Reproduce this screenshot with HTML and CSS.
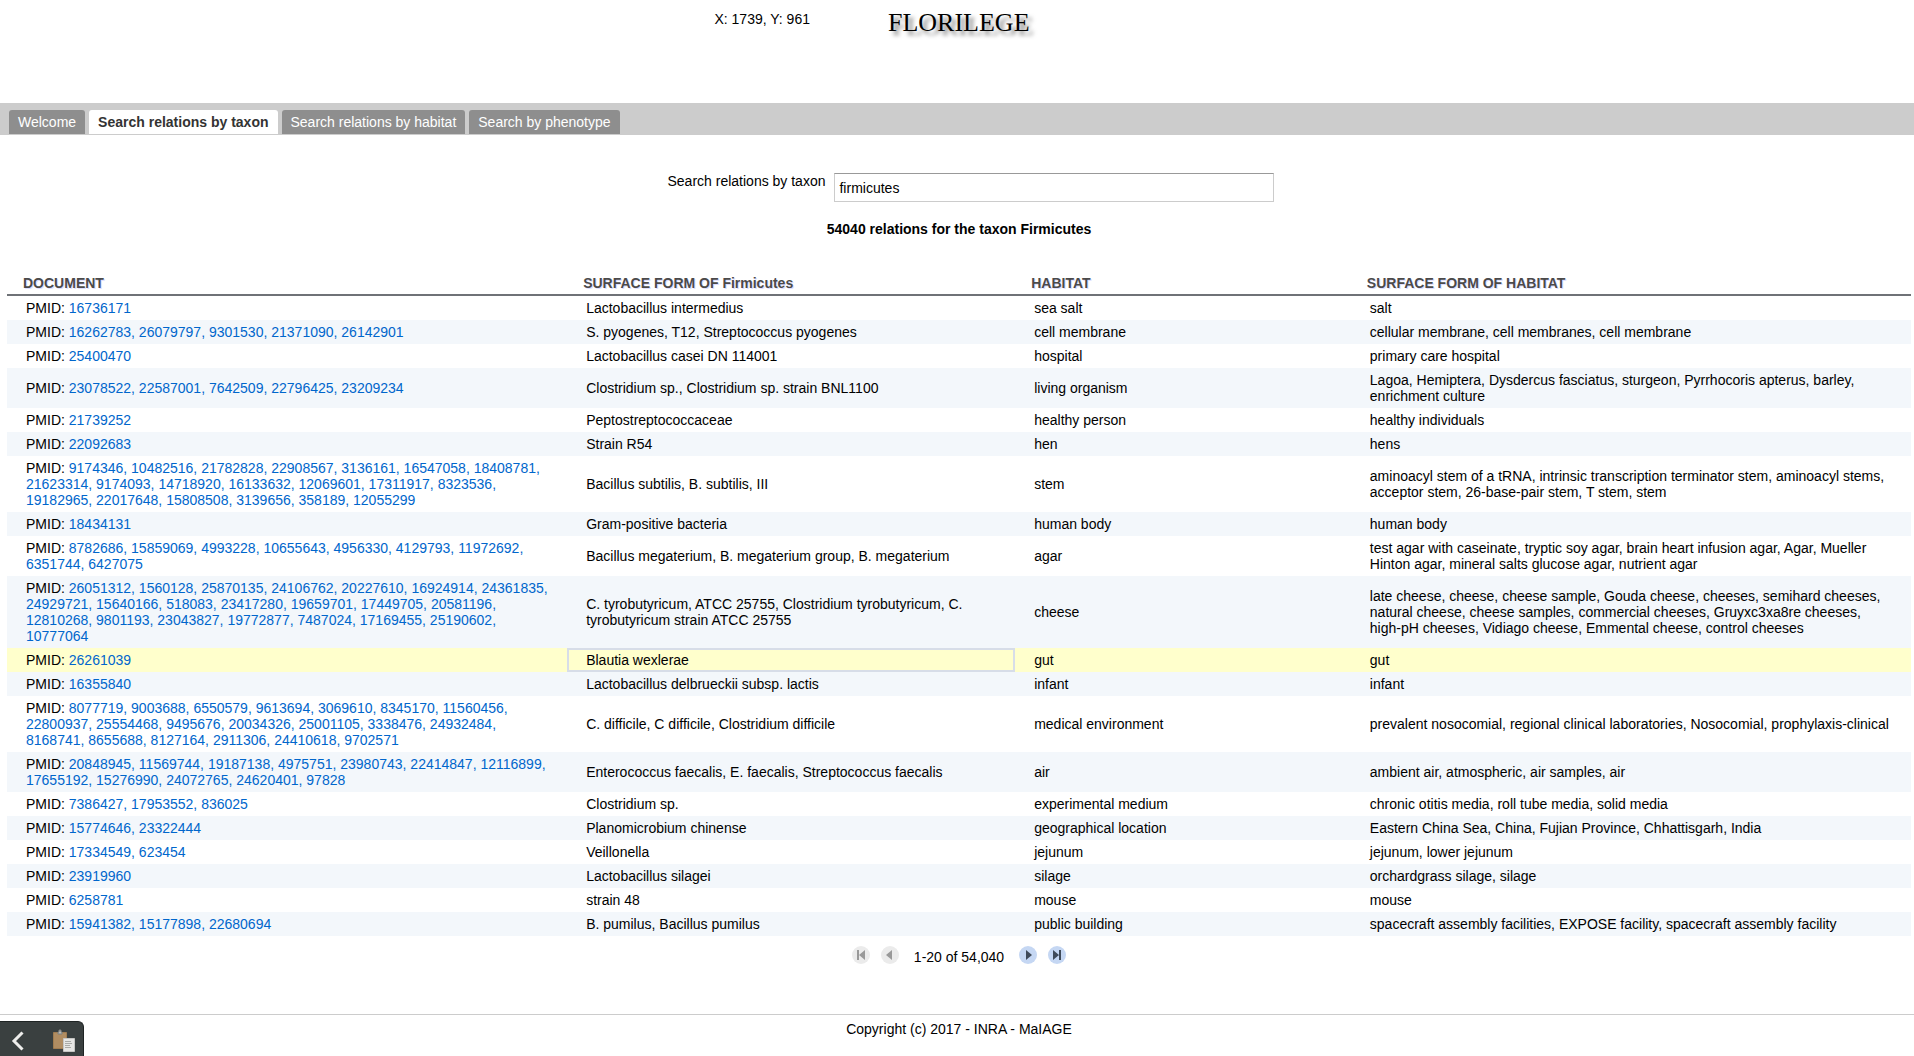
FILE: index.html
```html
<!DOCTYPE html>
<html lang="en">
<head>
<meta charset="utf-8">
<title>Florilege</title>
<link rel="stylesheet" href="styles.css">
</head>
<body>
<header class="banner">
  <span class="coords">X: 1739, Y: 961</span>
  <h1 class="brand">FLORILEGE</h1>
</header>

<nav class="tabs">
  <button class="tab" type="button">Welcome</button>
  <button class="tab tab-selected" type="button">Search relations by taxon</button>
  <button class="tab" type="button">Search relations by habitat</button>
  <button class="tab" type="button">Search by phenotype</button>
</nav>

<main class="content">
  <form class="search">
    <label class="search-label" for="taxon">Search relations by taxon</label>
    <input class="search-box" id="taxon" type="text" value="firmicutes">
  </form>
  <p class="summary">54040 relations for the taxon Firmicutes</p>

  <table class="grid">
    <colgroup>
      <col class="col-wide"><col class="col-form"><col class="col-habitat"><col class="col-wide">
    </colgroup>
    <thead>
      <tr><th>DOCUMENT</th><th>SURFACE FORM OF Firmicutes</th><th>HABITAT</th><th>SURFACE FORM OF HABITAT</th></tr>
    </thead>
    <tbody>
      <tr><td>PMID: <a href="#">16736171</a></td><td>Lactobacillus intermedius</td><td>sea salt</td><td>salt</td></tr>
      <tr><td>PMID: <a href="#">16262783,</a> <a href="#">26079797,</a> <a href="#">9301530,</a> <a href="#">21371090,</a> <a href="#">26142901</a></td><td>S. pyogenes, T12, Streptococcus pyogenes</td><td>cell membrane</td><td>cellular membrane, cell membranes, cell membrane</td></tr>
      <tr><td>PMID: <a href="#">25400470</a></td><td>Lactobacillus casei DN 114001</td><td>hospital</td><td>primary care hospital</td></tr>
      <tr><td>PMID: <a href="#">23078522,</a> <a href="#">22587001,</a> <a href="#">7642509,</a> <a href="#">22796425,</a> <a href="#">23209234</a></td><td>Clostridium sp., Clostridium sp. strain BNL1100</td><td>living organism</td><td>Lagoa, Hemiptera, Dysdercus fasciatus, sturgeon, Pyrrhocoris apterus, barley, enrichment culture</td></tr>
      <tr><td>PMID: <a href="#">21739252</a></td><td>Peptostreptococcaceae</td><td>healthy person</td><td>healthy individuals</td></tr>
      <tr><td>PMID: <a href="#">22092683</a></td><td>Strain R54</td><td>hen</td><td>hens</td></tr>
      <tr><td>PMID: <a href="#">9174346,</a> <a href="#">10482516,</a> <a href="#">21782828,</a> <a href="#">22908567,</a> <a href="#">3136161,</a> <a href="#">16547058,</a> <a href="#">18408781,</a> <a href="#">21623314,</a> <a href="#">9174093,</a> <a href="#">14718920,</a> <a href="#">16133632,</a> <a href="#">12069601,</a> <a href="#">17311917,</a> <a href="#">8323536,</a> <a href="#">19182965,</a> <a href="#">22017648,</a> <a href="#">15808508,</a> <a href="#">3139656,</a> <a href="#">358189,</a> <a href="#">12055299</a></td><td>Bacillus subtilis, B. subtilis, III</td><td>stem</td><td>aminoacyl stem of a tRNA, intrinsic transcription terminator stem, aminoacyl stems, acceptor stem, 26-base-pair stem, T stem, stem</td></tr>
      <tr><td>PMID: <a href="#">18434131</a></td><td>Gram-positive bacteria</td><td>human body</td><td>human body</td></tr>
      <tr><td>PMID: <a href="#">8782686,</a> <a href="#">15859069,</a> <a href="#">4993228,</a> <a href="#">10655643,</a> <a href="#">4956330,</a> <a href="#">4129793,</a> <a href="#">11972692,</a> <a href="#">6351744,</a> <a href="#">6427075</a></td><td>Bacillus megaterium, B. megaterium group, B. megaterium</td><td>agar</td><td>test agar with caseinate, tryptic soy agar, brain heart infusion agar, Agar, Mueller Hinton agar, mineral salts glucose agar, nutrient agar</td></tr>
      <tr><td>PMID: <a href="#">26051312,</a> <a href="#">1560128,</a> <a href="#">25870135,</a> <a href="#">24106762,</a> <a href="#">20227610,</a> <a href="#">16924914,</a> <a href="#">24361835,</a> <a href="#">24929721,</a> <a href="#">15640166,</a> <a href="#">518083,</a> <a href="#">23417280,</a> <a href="#">19659701,</a> <a href="#">17449705,</a> <a href="#">20581196,</a> <a href="#">12810268,</a> <a href="#">9801193,</a> <a href="#">23043827,</a> <a href="#">19772877,</a> <a href="#">7487024,</a> <a href="#">17169455,</a> <a href="#">25190602,</a> <a href="#">10777064</a></td><td>C. tyrobutyricum, ATCC 25755, Clostridium tyrobutyricum, C. tyrobutyricum strain ATCC 25755</td><td>cheese</td><td>late cheese, cheese, cheese sample, Gouda cheese, cheeses, semihard cheeses, natural cheese, cheese samples, commercial cheeses, Gruyxc3xa8re cheeses, high-pH cheeses, Vidiago cheese, Emmental cheese, control cheeses</td></tr>
      <tr class="row-selected"><td>PMID: <a href="#">26261039</a></td><td class="cell-focused">Blautia wexlerae</td><td>gut</td><td>gut</td></tr>
      <tr><td>PMID: <a href="#">16355840</a></td><td>Lactobacillus delbrueckii subsp. lactis</td><td>infant</td><td>infant</td></tr>
      <tr><td>PMID: <a href="#">8077719,</a> <a href="#">9003688,</a> <a href="#">6550579,</a> <a href="#">9613694,</a> <a href="#">3069610,</a> <a href="#">8345170,</a> <a href="#">11560456,</a> <a href="#">22800937,</a> <a href="#">25554468,</a> <a href="#">9495676,</a> <a href="#">20034326,</a> <a href="#">25001105,</a> <a href="#">3338476,</a> <a href="#">24932484,</a> <a href="#">8168741,</a> <a href="#">8655688,</a> <a href="#">8127164,</a> <a href="#">2911306,</a> <a href="#">24410618,</a> <a href="#">9702571</a></td><td>C. difficile, C difficile, Clostridium difficile</td><td>medical environment</td><td>prevalent nosocomial, regional clinical laboratories, Nosocomial, prophylaxis-clinical</td></tr>
      <tr><td>PMID: <a href="#">20848945,</a> <a href="#">11569744,</a> <a href="#">19187138,</a> <a href="#">4975751,</a> <a href="#">23980743,</a> <a href="#">22414847,</a> <a href="#">12116899,</a> <a href="#">17655192,</a> <a href="#">15276990,</a> <a href="#">24072765,</a> <a href="#">24620401,</a> <a href="#">97828</a></td><td>Enterococcus faecalis, E. faecalis, Streptococcus faecalis</td><td>air</td><td>ambient air, atmospheric, air samples, air</td></tr>
      <tr><td>PMID: <a href="#">7386427,</a> <a href="#">17953552,</a> <a href="#">836025</a></td><td>Clostridium sp.</td><td>experimental medium</td><td>chronic otitis media, roll tube media, solid media</td></tr>
      <tr><td>PMID: <a href="#">15774646,</a> <a href="#">23322444</a></td><td>Planomicrobium chinense</td><td>geographical location</td><td>Eastern China Sea, China, Fujian Province, Chhattisgarh, India</td></tr>
      <tr><td>PMID: <a href="#">17334549,</a> <a href="#">623454</a></td><td>Veillonella</td><td>jejunum</td><td>jejunum, lower jejunum</td></tr>
      <tr><td>PMID: <a href="#">23919960</a></td><td>Lactobacillus silagei</td><td>silage</td><td>orchardgrass silage, silage</td></tr>
      <tr><td>PMID: <a href="#">6258781</a></td><td>strain 48</td><td>mouse</td><td>mouse</td></tr>
      <tr><td>PMID: <a href="#">15941382,</a> <a href="#">15177898,</a> <a href="#">22680694</a></td><td>B. pumilus, Bacillus pumilus</td><td>public building</td><td>spacecraft assembly facilities, EXPOSE facility, spacecraft assembly facility</td></tr>
    </tbody>
  </table>

  <div class="pager">
    <button class="page-button" type="button" aria-label="First page" disabled>
      <svg width="18" height="18" viewBox="0 0 18 18"><path d="M5 4h2v10H5zM13 4v10L7 9z"/></svg>
    </button>
    <button class="page-button" type="button" aria-label="Previous page" disabled>
      <svg width="18" height="18" viewBox="0 0 18 18"><path d="M11 4v10L5 9z"/></svg>
    </button>
    <span class="page-range">1-20 of 54,040</span>
    <button class="page-button" type="button" aria-label="Next page">
      <svg width="18" height="18" viewBox="0 0 18 18"><path d="M7 4v10l6-5z"/></svg>
    </button>
    <button class="page-button" type="button" aria-label="Last page">
      <svg width="18" height="18" viewBox="0 0 18 18"><path d="M11 4h2v10h-2zM5 4v10l6-5z"/></svg>
    </button>
  </div>
</main>

<footer class="footer">Copyright (c) 2017 - INRA - MaIAGE</footer>

<div class="dock">
  <button class="dock-button" type="button" aria-label="Back">
    <svg width="14" height="20" viewBox="0 0 14 20"><path d="M11.500 1.500L3 10l8.500 8.500" fill="none" stroke="#eeeeec" stroke-width="3"/></svg>
  </button>
  <button class="dock-button" type="button" aria-label="Clipboard">
    <svg width="24" height="24" viewBox="0 0 24 24">
      <path d="M1.500 3.500h13v16h-13z" fill="#b08d62" stroke="#a07c50"/>
      <path d="M6 3h1V1h2v2h1v2H6z" fill="#b9bbb8" stroke="#7d7f7c"/>
      <path d="M11.500 9.500h11v13h-11z" fill="#e6e6e4" stroke="#c5c5c3"/>
      <path d="M13 12.500h6M13 14.500h7M13 16.500h5M13 18.500h6" stroke="#a9aaa7"/>
    </svg>
  </button>
</div>
</body>
</html>
```
FILE: styles.css
```css
* {
  box-sizing: border-box;
}

body {
  margin: 0;
  background: #fff;
  color: #000;
  font-family: "Liberation Sans", Arial, sans-serif;
  font-size: 14px;
  line-height: 16px;
}

button,
input {
  font: inherit;
}

a {
  color: #06c;
  text-decoration: none;
}

.banner {
  display: flex;
  justify-content: center;
  align-items: flex-start;
  gap: 78px;
  height: 103px;
  padding: 8px 0 0;
}

.coords {
  padding-top: 3px;
}

.brand {
  margin: 0 170px 0 0;
  font-family: "Liberation Serif", "Times New Roman", serif;
  font-size: 26px;
  font-weight: 400;
  line-height: 30px;
  text-shadow: 4px 4px 4px #777;
}

.tabs {
  display: flex;
  align-items: flex-end;
  gap: 4px;
  height: 32px;
  padding: 0 9px 1px;
  background: #ccc;
}

.tab {
  padding: 4px 9px;
  border: 0;
  border-radius: 3px 3px 0 0;
  background: #8e8e8e;
  color: #fff;
}

.tab-selected {
  background: #fff;
  color: #333;
  font-weight: 700;
}

.content {
  padding: 38px 3px 0 7px;
}

.search {
  display: flex;
  justify-content: center;
  gap: 9px;
  padding-right: 20px;
  padding-left: 44px;
}

.search-box {
  width: 440px;
  height: 29px;
  padding: 0 4px;
  border: 1px solid #ccc;
  border-top-color: #999;
  background: #fff;
  color: #000;
}

.summary {
  margin: 19px 0 0;
  font-weight: 700;
  text-align: center;
}

.grid {
  width: 100%;
  margin-top: 35px;
  border-collapse: separate;
  border-spacing: 0;
  table-layout: fixed;
}

.col-wide {
  width: 29.42%;
}

.col-form {
  width: 23.53%;
}

.col-habitat {
  width: 17.63%;
}

.grid th {
  padding: 3px 16px;
  border-bottom: 2px solid #6f7277;
  color: #4b4a4a;
  font-weight: 700;
  text-align: left;
  text-shadow: #ddf 1px 1px 0;
}

.grid td {
  padding: 2px 15px 2px 17px;
  border: 2px solid #fff;
  background: #fff;
}

.grid tbody tr:nth-child(even) td {
  border-color: #f3f7fb;
  background: #f3f7fb;
}

.grid tbody .row-selected td {
  border-color: #ffc;
  background: #ffc;
}

.grid tbody .row-selected .cell-focused {
  border-color: #d7dde8;
}

.pager {
  display: flex;
  justify-content: center;
  align-items: center;
  gap: 11px;
  padding-top: 9px;
}

.page-button {
  display: flex;
  padding: 0;
  border: 0;
  border-radius: 50%;
  background: #c5d7f3;
  fill: #3f4a59;
}

.page-button:disabled {
  background: #ebebeb;
  fill: #999;
}

.page-range {
  padding: 4px 4px 0;
}

.footer {
  margin-top: 49px;
  padding: 6px 0 20px 4px;
  border-top: 1px solid #ccc;
  text-align: center;
}

.dock {
  position: fixed;
  bottom: 0;
  left: 0;
  display: flex;
  align-items: center;
  justify-content: space-between;
  width: 84px;
  height: 35px;
  padding: 3px 7px 0 11px;
  border-top: 1px solid #1f2424;
  border-right: 1px solid #1f2424;
  border-radius: 0 6px 0 0;
  background: #3a4040;
}

.dock-button {
  display: flex;
  padding: 0;
  border: 0;
  background: none;
}
```
